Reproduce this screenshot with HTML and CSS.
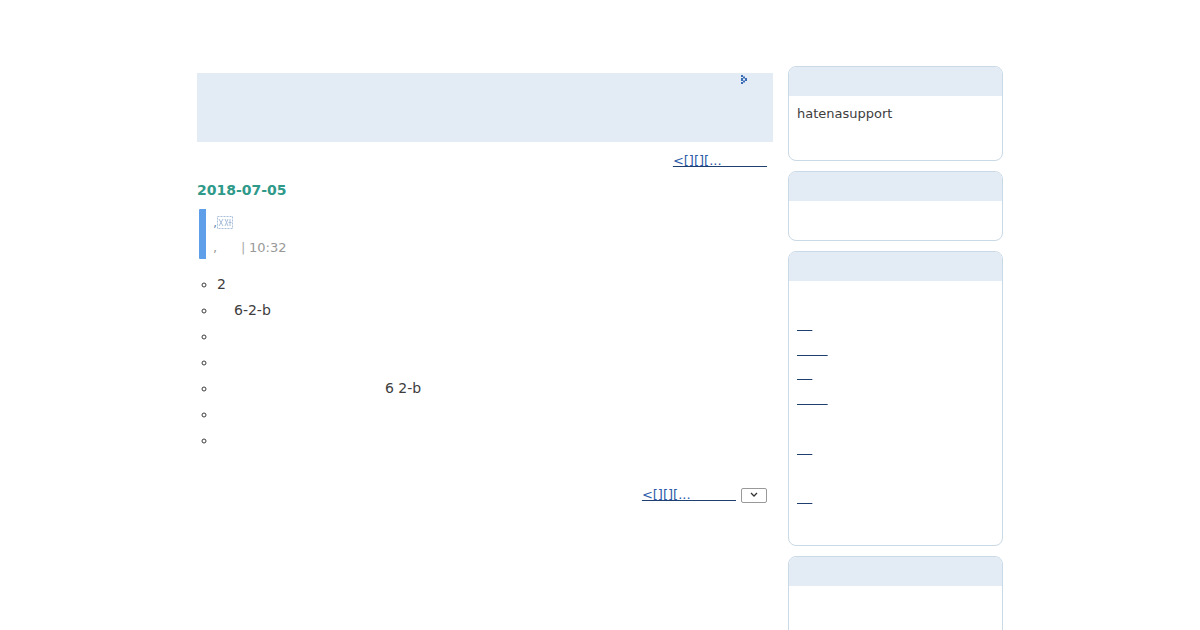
FILE: index.html
```html
<!DOCTYPE html>
<html lang="ja">
<head>
  <meta charset="UTF-8">
  <title>hatenasupport</title>
  <link rel="stylesheet" href="styles.css">
</head>
<body>
  <div class="wrapper">
    <div class="main">
      <div class="page-header">
        <svg class="header-arrow" width="7" height="9" viewBox="0 0 7 9">
          <path d="M0 0h2v2H0zM0 3h2v3H0zM0 7h2v2H0zM2 1.500h2v2H2zM2 5.500h2v2H2zM4 3h2v3H4z" fill="#3a6db5"/>
        </svg>
      </div>
      <div class="pager pager-top">
        <a href="#">&lt;[][][...&nbsp;&nbsp;&nbsp;&nbsp;&nbsp;&nbsp;&nbsp;&nbsp;&nbsp;&nbsp;&nbsp;</a>
      </div>

      <h2 class="date">2018-07-05</h2>

      <div class="section-title">
        <div class="title-line">
          <span>,</span>
          <svg class="title-icon" width="16" height="13" viewBox="0 0 16 13">
            <rect x="0.500" y="0.500" width="15" height="12" fill="none" stroke="#a9bfda" stroke-dasharray="2 1"/>
            <path d="M2 3l4 7M6 3l-4 7M8 3l3 7M11 3l-3 7M13 3v7M11.500 6.500h3" fill="none" stroke="#a9bfda"/>
          </svg>
        </div>
        <div class="title-meta">
          <span class="meta-comma">,</span>
          <span class="meta-sep">|</span>
          <span>10:32</span>
        </div>
      </div>

      <ul class="entry-list">
        <li>2</li>
        <li><span class="indent-1">6-2-b</span></li>
        <li>&nbsp;</li>
        <li>&nbsp;</li>
        <li><span class="indent-2">6 2-b</span></li>
        <li>&nbsp;</li>
        <li>&nbsp;</li>
      </ul>

      <div class="pager pager-bottom">
        <a href="#">&lt;[][][...&nbsp;&nbsp;&nbsp;&nbsp;&nbsp;&nbsp;&nbsp;&nbsp;&nbsp;&nbsp;&nbsp;</a>
        <button class="more-btn" type="button">
          <svg width="8" height="6" viewBox="0 0 8 6">
            <path d="M1 1l3 3 3-3" fill="none" stroke="#333" stroke-width="1.300"/>
          </svg>
        </button>
      </div>
    </div>

    <div class="sidebar">
      <div class="module">
        <div class="module-head"></div>
        <div class="module-body profile">hatenasupport</div>
      </div>
      <div class="module">
        <div class="module-head"></div>
        <div class="module-body empty"></div>
      </div>
      <div class="module">
        <div class="module-head"></div>
        <ul class="module-body link-list">
          <li><a href="#" class="short">&nbsp;&nbsp;&nbsp;&nbsp;</a></li>
          <li><a href="#" class="long">&nbsp;&nbsp;&nbsp;&nbsp;&nbsp;&nbsp;&nbsp;&nbsp;</a></li>
          <li><a href="#" class="short">&nbsp;&nbsp;&nbsp;&nbsp;</a></li>
          <li><a href="#" class="long">&nbsp;&nbsp;&nbsp;&nbsp;&nbsp;&nbsp;&nbsp;&nbsp;</a></li>
          <li class="two-line"><a href="#" class="short">&nbsp;&nbsp;&nbsp;&nbsp;</a></li>
          <li class="two-line"><a href="#" class="short">&nbsp;&nbsp;&nbsp;&nbsp;</a></li>
        </ul>
      </div>
      <div class="module">
        <div class="module-head"></div>
        <div class="module-body tall"></div>
      </div>
    </div>
  </div>
</body>
</html>
```

FILE: styles.css
```css
html {
  overflow: hidden;
}
body {
  margin: 0;
  background: #fff;
  color: #3d3d3d;
  font-family: "DejaVu Sans", sans-serif;
  font-size: 13px;
}
a {
  color: #2a5aa8;
  text-decoration-color: #1f3f70;
  text-decoration-skip-ink: none;
}
.wrapper {
  display: flex;
  gap: 15px;
  width: 806px;
  margin: 0 auto;
  padding-top: 66px;
}
.main {
  width: 576px;
  padding-top: 7px;
}
.sidebar {
  display: flex;
  flex-direction: column;
  gap: 10px;
  width: 215px;
}

/* ヘッダー */
.page-header {
  position: relative;
  height: 69px;
  background: #e3ebf5;
}
.header-arrow {
  position: absolute;
  top: 2px;
  left: 544px;
}

/* ページャー */
.pager {
  display: flex;
  justify-content: flex-end;
  align-items: center;
  gap: 5px;
  padding-right: 6px;
  line-height: 16px;
}
.pager-top {
  margin-top: 11px;
}
.pager-bottom {
  margin-top: 34px;
}
.more-btn {
  display: flex;
  justify-content: center;
  align-items: center;
  width: 26px;
  height: 15px;
  padding: 0;
  background: #fff;
  border: 1px solid #999;
  border-radius: 2px;
}

/* 記事 */
.date {
  margin: 12px 0 0;
  color: #2f9a8a;
  font-size: 14px;
  line-height: 18px;
}
.section-title {
  height: 50px;
  margin: 10px 0 0 2px;
  padding-left: 7px;
  border-left: 7px solid #5f9ee8;
  border-radius: 1px;
  color: #999;
}
.title-line {
  display: flex;
  align-items: flex-end;
  height: 21px;
  color: #6c8fb8;
}
.title-icon {
  margin-bottom: 1px;
}
.title-meta {
  display: flex;
  align-items: center;
  height: 16px;
  margin-top: 9px;
}
.meta-comma {
  width: 28px;
}
.meta-sep {
  width: 8px;
  color: #aaa;
}
.entry-list {
  margin: 12px 0 0;
  padding: 0 0 0 20px;
  font-size: 14px;
  line-height: 26px;
  list-style: circle;
}
.indent-1 {
  padding-left: 17px;
}
.indent-2 {
  padding-left: 168px;
}

/* サイドバー */
.module {
  border: 1px solid #c9d9e6;
  border-radius: 8px;
  overflow: hidden;
}
.module-head {
  height: 29px;
  background: #e3ebf5;
}
.module-body {
  margin: 0;
  padding: 0 8px;
}
.profile {
  height: 64px;
  padding-top: 9px;
  box-sizing: border-box;
  line-height: 18px;
}
.empty {
  height: 39px;
}
.tall {
  height: 200px;
}
.link-list {
  height: 264px;
  box-sizing: border-box;
  padding-top: 32px;
  line-height: 24.700px;
  list-style: none;
}
.link-list a {
  letter-spacing: -0.300px;
}
.two-line {
  margin-top: 24.700px;
}
```
